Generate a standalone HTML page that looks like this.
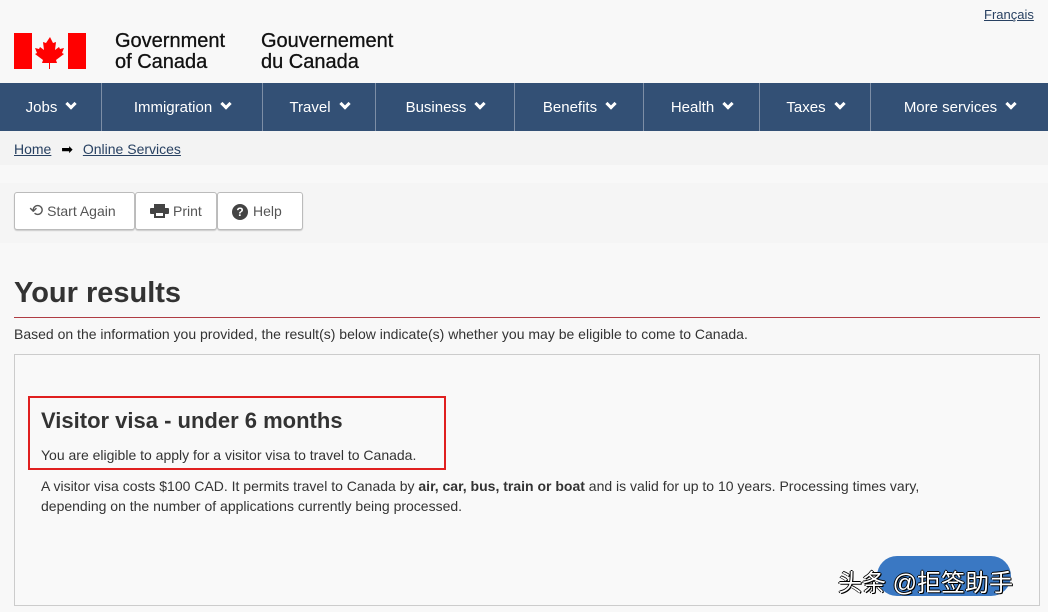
<!DOCTYPE html>
<html><head><meta charset="utf-8"><style>
*{margin:0;padding:0;box-sizing:border-box}
body{width:1048px;height:612px;overflow:hidden;background:#f8f8f8;font-family:"Liberation Sans",Arial,sans-serif;color:#333;position:relative}
.abs{position:absolute}
a{color:#284162;text-decoration:underline}
.nav{left:0;top:83px;width:1048px;height:48px;background:#335075;color:#fff;font-size:15px}
.nav div{position:absolute;top:0;height:48px;line-height:50px;text-align:center;border-right:1px solid #7d8ea6}
.chev{display:inline-block;width:8px;height:8px;border-right:3px solid #fff;border-bottom:3px solid #fff;transform:rotate(45deg);margin-left:10px;position:relative;top:-4px}
.btn{position:absolute;top:192px;height:38px;border:1px solid #bbb;border-radius:3px;background:#fff;font-size:14px;line-height:36px;color:#555;padding-left:14px;box-shadow:0 1px 1px #ccc}
</style></head><body>
<a class="abs" style="left:984px;top:7px;font-size:13px">Français</a>
<svg class="abs" style="left:14px;top:33px" width="72" height="36" viewBox="0 0 72 36">
<rect x="0" y="0" width="18" height="36" fill="#f00"/><rect x="54" y="0" width="18" height="36" fill="#f00"/>
<path d="M36 4l3 6 3-1-1 8 4-3 1 2 4-1-2 5 2 1-8 6 1 3h-7v6h-1v-6h-7l1-3-8-6 2-1-2-5 4 1 1-2 4 3-1-8 3 1z" fill="#f00"/></svg>
<div class="abs" style="left:115px;top:31px;font-size:20px;line-height:21px;color:#111;-webkit-text-stroke:0.3px #111">Government<br>of Canada</div>
<div class="abs" style="left:261px;top:31px;font-size:20px;line-height:21px;color:#111;-webkit-text-stroke:0.3px #111">Gouvernement<br>du Canada</div>
<div class="abs nav">
<div style="left:0;width:102px">Jobs<span class="chev"></span></div>
<div style="left:102px;width:161px">Immigration<span class="chev"></span></div>
<div style="left:263px;width:113px">Travel<span class="chev"></span></div>
<div style="left:376px;width:139px">Business<span class="chev"></span></div>
<div style="left:515px;width:129px">Benefits<span class="chev"></span></div>
<div style="left:644px;width:116px">Health<span class="chev"></span></div>
<div style="left:760px;width:111px">Taxes<span class="chev"></span></div>
<div style="left:871px;width:177px;border:none">More services<span class="chev"></span></div>
</div>
<div class="abs" style="left:0;top:131px;width:1048px;height:34px;background:#f3f3f3"></div>
<div class="abs" style="left:14px;top:141px;font-size:14px"><a>Home</a> <span style="margin:0 6px;color:#000">➡</span> <a>Online Services</a></div>
<div class="abs" style="left:0;top:183px;width:1048px;height:60px;background:#f5f5f5"></div>
<div class="btn" style="left:14px;width:121px"><span style="font-size:17px">⟲</span> Start Again</div>
<div class="btn" style="left:135px;width:82px;padding-left:14px"><svg width="19" height="14" viewBox="0 0 19 14" style="vertical-align:-2px;margin-right:4px"><rect x="4" y="0" width="11" height="4" fill="#444"/><rect x="0" y="4" width="19" height="6" rx="1" fill="#444"/><rect x="4" y="8" width="11" height="6" fill="#444"/><rect x="6" y="9" width="7" height="3" fill="#fff"/></svg>Print</div>
<div class="btn" style="left:217px;width:86px"><span style="display:inline-block;width:16px;height:16px;border-radius:50%;background:#444;color:#fff;font-size:12px;font-weight:bold;line-height:16px;text-align:center;margin-right:5px">?</span>Help</div>
<div class="abs" style="left:14px;top:277px;font-size:29px;font-weight:bold;color:#333">Your results</div>
<div class="abs" style="left:14px;top:317px;width:1026px;height:1px;background:#af3c43"></div>
<div class="abs" style="left:14px;top:326px;font-size:14px">Based on the information you provided, the result(s) below indicate(s) whether you may be eligible to come to Canada.</div>
<div class="abs" style="left:14px;top:354px;width:1026px;height:252px;border:1px solid #ccc;background:#f9f9f9"></div>
<div class="abs" style="left:28px;top:396px;width:418px;height:74px;border:2px solid #e02020"></div>
<div class="abs" style="left:41px;top:408px;font-size:22px;font-weight:bold;color:#333">Visitor visa - under 6 months</div>
<div class="abs" style="left:41px;top:447px;font-size:14px">You are eligible to apply for a visitor visa to travel to Canada.</div>
<div class="abs" style="left:41px;top:476px;width:915px;font-size:14px;line-height:20px">A visitor visa costs $100 CAD. It permits travel to Canada by <b>air, car, bus, train or boat</b> and is valid for up to 10 years. Processing times vary, depending on the number of applications currently being processed.</div>
<div class="abs" style="left:877px;top:556px;width:134px;height:40px;border-radius:20px;background:#3a78c3"></div>
<div class="abs" style="left:838px;top:563px;font-size:24px;color:#fff;font-family:'Liberation Sans','Noto Sans CJK SC',sans-serif;text-shadow:1px 1px 0 #000,-1px 0 0 #000,0 -1px 0 #000,1px 0 0 #000">头条 @拒签助手</div>
</body></html>
